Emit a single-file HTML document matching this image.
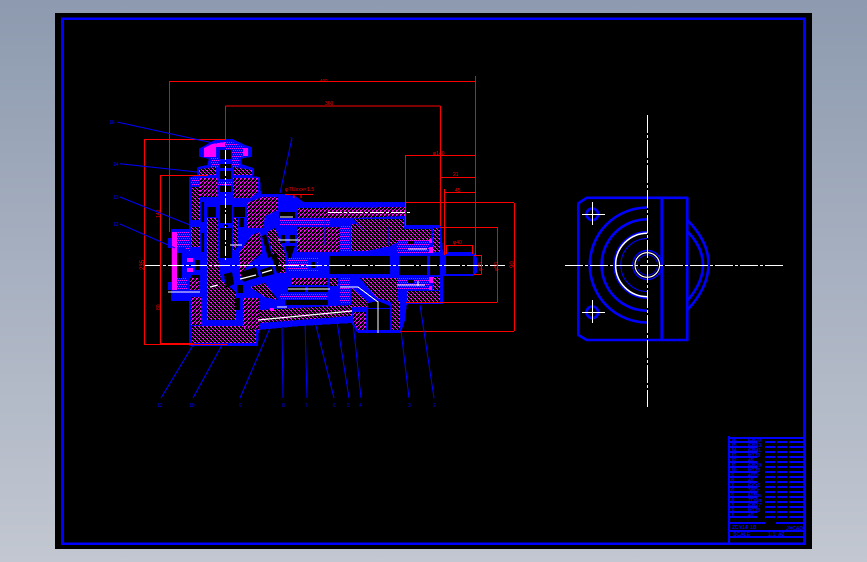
<!DOCTYPE html>
<html><head><meta charset="utf-8"><title>CAD drawing</title>
<style>
html,body{margin:0;padding:0;width:867px;height:562px;overflow:hidden;background:linear-gradient(180deg,#8d9aaf 0%,#a8b1c1 50%,#c2c7d1 100%)}
#f{position:absolute;left:55px;top:13px;width:757px;height:536px;background:#000}
svg{position:absolute;left:0;top:0}
text{font-family:"Liberation Sans",sans-serif}
</style></head><body>
<div id="f"></div>
<svg width="867" height="562" viewBox="0 0 867 562" shape-rendering="crispEdges" fill="none">
<defs>
<pattern id="h" width="4" height="4" patternUnits="userSpaceOnUse">
<rect width="4" height="4" fill="#000"/>
<g fill="#f0f"><rect x="3" y="0" width="1" height="1"/><rect x="2" y="1" width="1" height="1"/><rect x="0" y="2" width="2" height="1"/><rect x="0" y="3" width="1" height="1"/></g>
</pattern>
<pattern id="g" width="4" height="4" patternUnits="userSpaceOnUse">
<rect width="4" height="4" fill="#000"/>
<g fill="#f0f"><rect x="0" y="0" width="1" height="1"/><rect x="1" y="1" width="1" height="1"/><rect x="2" y="2" width="2" height="1"/><rect x="3" y="3" width="1" height="1"/></g>
</pattern>
<pattern id="d" width="4" height="4" patternUnits="userSpaceOnUse">
<rect width="4" height="4" fill="#00f"/>
<g fill="#f0f"><rect x="0" y="0" width="1" height="1"/><rect x="2" y="0" width="1" height="1"/><rect x="1" y="2" width="1" height="1"/><rect x="3" y="2" width="1" height="1"/></g>
<g fill="#000"><rect x="1" y="1" width="1" height="1"/><rect x="3" y="3" width="1" height="1"/></g>
</pattern>
</defs>

<!-- frame -->
<rect x="62.5" y="18.7" width="742" height="525" stroke="#00f" stroke-width="2.6"/>

<!-- silhouette -->
<path fill="#00f" stroke="#00f" stroke-width="2" stroke-linejoin="round" d="M190 345V178L198 176V168L208 166L210 158L205 157L200 156V149L206 146L217 140H232L245 146L251 148V156L244 157L240 158L241 165L253 169V174L250 177L259 178L260 195H283L295 197L303 203H405V226H440L442 253H473L476 258V272L473 275H442V303H406L404 320L400 332H358L352 322L300 325L258 329L257 345Z"/>
<path fill="#00f" stroke="#00f" stroke-width="2" d="M172 230H190V300H172Z"/>
<rect x="168" y="238" width="5" height="10" fill="#00f"/><rect x="168" y="282" width="5" height="8" fill="#00f"/>

<!-- knob -->
<path fill="url(#d)" d="M225 142H232L244 147L242 158H232V150H225Z"/>
<path fill="#f0f" d="M204 148L212 144L225 142V147H216V157H204Z"/>
<rect x="243" y="148" width="5" height="8" fill="#f0f"/>
<rect x="211" y="158" width="8" height="9" fill="url(#d)"/>
<rect x="232" y="158" width="7" height="9" fill="url(#d)"/>
<path fill="url(#g)" d="M199 169L216 167V175H199ZM234 167L252 170V175H234Z"/>
<rect x="220" y="150" width="11" height="9" fill="#000"/>
<rect x="220" y="164" width="11" height="4" fill="#000"/>
<rect x="220" y="171" width="11" height="8" fill="#000"/>
<rect x="220" y="186" width="11" height="6" fill="#000"/>
<rect x="218" y="181" width="14" height="4" fill="url(#d)"/>

<!-- upper valve body -->
<path fill="url(#h)" d="M200 178H217V197H200ZM233 178H258V192L250 198H233Z"/>
<rect x="191" y="178" width="8" height="8" fill="url(#d)"/>
<path fill="url(#g)" d="M192 187H200V220H192ZM191 227H200V247H191Z"/>
<path fill="url(#h)" d="M191 297H201V325H191Z"/>
<path fill="url(#g)" d="M192 326H256V343H192Z"/>
<rect x="201" y="202" width="3" height="20" fill="#000"/>
<rect x="201" y="233" width="3" height="19" fill="#000"/>
<rect x="207" y="207" width="9" height="10" fill="#000"/>
<rect x="233" y="207" width="12" height="10" fill="#000"/>
<rect x="220" y="205" width="12" height="18" fill="#000"/>
<rect x="220" y="228" width="12" height="30" fill="#000"/>
<rect x="224" y="225" width="4" height="2" fill="#000"/>
<path fill="url(#g)" d="M207 218H218V258L207 277Z"/>
<path fill="url(#g)" d="M207 258H218L221 280L236 292V320H207Z"/>
<path fill="url(#g)" d="M233 218H238V246L233 252Z"/>
<rect x="239" y="218" width="5" height="9" fill="#000"/>
<path fill="url(#h)" d="M247 203L262 197H278V210L265 216L263 228H247Z"/>
<path fill="url(#h)" d="M243 298H259V330L243 328Z"/>
<rect x="235" y="298" width="5" height="12" fill="#000"/>

<!-- flange -->
<path fill="url(#d)" d="M177 232H190V252L184 247H177Z"/>
<rect x="172" y="232" width="5" height="58" fill="#f0f"/>
<rect x="177" y="253" width="5" height="25" fill="#000"/>
<path fill="url(#d)" d="M177 278H187V290H177Z"/>
<rect x="187" y="258" width="6" height="4" fill="#f0f"/>
<rect x="187" y="268" width="6" height="4" fill="#f0f"/>
<rect x="195" y="260" width="5" height="10" fill="#000"/>
<rect x="191" y="275" width="9" height="6" fill="#000"/>
<path fill="url(#h)" d="M190 278H199V290H190Z"/>

<!-- swash -->
<path fill="url(#h)" d="M239 253L252 235L260 232L262 253L248 265L240 277Z"/>
<path fill="url(#g)" d="M267 232L275 228L285 253V273H278L275 263Z"/>
<path fill="#000" d="M262 236L266 234L272 256L268 258Z"/>
<path fill="#000" d="M271 255L276 253L282 271L277 273Z"/>
<path fill="#000" d="M240 272L256 267L259 277L243 282Z"/>
<path fill="#000" d="M260 270L272 266L274 274L262 277Z"/>
<path fill="#000" d="M224 274L232 272L234 284L226 288Z"/>
<path fill="url(#g)" d="M250 287L265 283L278 300L265 297Z"/>
<rect x="237" y="285" width="6" height="8" fill="#000"/>

<!-- top barrel -->
<path fill="url(#h)" d="M298 208L405 207V216L355 218H297Z"/>
<rect x="280" y="220" width="50" height="6" fill="url(#d)"/>
<rect x="279" y="212" width="16" height="6" fill="#000"/>
<path fill="url(#h)" d="M297 227H339V252H297Z"/>
<rect x="340" y="225" width="10" height="26" fill="url(#d)"/>
<path fill="url(#g)" d="M351 224H357L380 244L385 247L367 251H351Z"/>
<path fill="url(#g)" d="M353 219H404V229H431V243H396L388 247H381Z"/>
<path fill="url(#g)" d="M433 228H440V252H433Z"/>
<rect x="281" y="235" width="4" height="8" fill="#000"/>
<rect x="290" y="235" width="5" height="8" fill="#000"/>
<path fill="#000" d="M285 246H295L291 258H288Z"/>
<rect x="288" y="258" width="30" height="14" fill="url(#d)"/>
<rect x="308" y="260" width="9" height="10" fill="#00f"/><rect x="311" y="262" width="4" height="6" fill="#000"/>

<!-- shaft -->
<rect x="329" y="256" width="61" height="18" fill="#000"/>
<rect x="399" y="256" width="28" height="19" fill="#000"/>
<rect x="430" y="256" width="10" height="19" fill="#000"/>
<rect x="446" y="256" width="27" height="18" fill="#000"/>
<rect x="397" y="240" width="32" height="13" fill="url(#d)"/>
<rect x="397" y="277" width="32" height="13" fill="url(#d)"/>
<rect x="408" y="241" width="6" height="3" fill="#000"/>
<rect x="408" y="280" width="6" height="3" fill="#000"/>
<rect x="429" y="247" width="4" height="6" fill="#f0f"/>
<rect x="429" y="277" width="4" height="6" fill="#f0f"/>
<rect x="429" y="239" width="3" height="4" fill="#f0f"/>
<rect x="429" y="286" width="3" height="4" fill="#f0f"/>
<rect x="433" y="277" width="7" height="13" fill="url(#g)"/>

<!-- pistons lower -->
<path fill="url(#h)" d="M292 278H327V285H292Z"/>
<rect x="288" y="287" width="17" height="5" fill="#000"/>
<rect x="308" y="287" width="20" height="5" fill="#000"/>
<rect x="280" y="293" width="47" height="6" fill="url(#d)"/>
<rect x="285" y="300" width="43" height="5" fill="#000"/>
<rect x="330" y="278" width="8" height="8" fill="url(#g)"/>
<rect x="340" y="278" width="10" height="25" fill="url(#d)"/>
<path fill="url(#g)" d="M260 310L352 305V316L260 323Z"/>
<rect x="270" y="308" width="4" height="3" fill="#f0f"/>
<path fill="url(#g)" d="M352 288L367 301V307H352Z"/>
<path fill="url(#h)" d="M353 312H366V330H358L353 322Z"/>
<path fill="url(#g)" d="M360 278H397V302H391L377 298Z"/>
<path fill="#000" d="M368 303L378 301L390 306V330H368Z"/>
<rect x="368" y="308" width="22" height="1" fill="#00f"/>
<path fill="url(#g)" d="M392 301H400V330H392Z"/>
<rect x="407" y="291" width="33" height="11" fill="url(#g)"/>

<!-- hairlines -->
<path d="M325 245V220M388 245V227" stroke="#00f" stroke-width="1"/>

<!-- white center lines -->
<g stroke="#fff" stroke-width="1">
<path stroke-dasharray="16 2 3 2" d="M145 265.500H505"/>
<path stroke-dasharray="10 2 2 2" d="M225.500 150V262"/>
<path stroke-dasharray="14 2 3 2" d="M328 212.500H410"/>
<path d="M280 217H293M278 240H300M230 245H242M168 292H200M277 307H287M288 289H330M340 287H358L378 302V333"/>
<path d="M397 285H425M418 281V286M408 249H427"/>
</g>
<path stroke="#fff" stroke-width="1.200" shape-rendering="auto" d="M210 287L218 285M240 279L256 275M262 273L272 270M258 320L352 311"/>

<!-- red dimensions -->
<g stroke="#f00" stroke-width="1">
<path d="M170 81.500H475M169.500 81V232M225.500 106H440.500M225.500 106V140M440.500 106V226M475.500 76V255M405.500 155.500H475M405.500 155V226M440 177.500H475M444.500 189V255M444 192.500H475M405 202.500H514M514.500 203V331M400 331.500H514M440 227.500H497M497.500 227V302M406 302.500H497M446.500 245.500H472.500M446.500 245V254M472.500 245V254M474 255.500H481.500M481.500 255V274M474 274.500H481.500M144.500 139.500V344M144 139.500H225M144 344.500H227M160.500 175.500V344M160 175.500H208M285 194.500H313M294 194V198M301 194V198"/>
</g>
<rect x="160" y="343" width="33" height="2" fill="#f00"/>
<g fill="#f00" font-size="5">
<text x="320" y="82" font-size="4.500">400</text>
<text x="325" y="105">360</text>
<text x="433" y="155">φ140</text>
<text x="453" y="176">21</text>
<text x="455" y="192">45</text>
<text x="453" y="244">φ40</text>
<text x="285" y="191" font-size="5.400">φTUxxx×1.5</text>
<text transform="translate(160 218) rotate(-90)">140</text>
<text transform="translate(144 270) rotate(-90)" font-size="6">235</text>
<text transform="translate(160 310) rotate(-90)">80</text>
<text transform="translate(482 271) rotate(-90)">φ25</text>
<text transform="translate(498 271) rotate(-90)">φ50</text>
<text transform="translate(514 268) rotate(-90)" font-size="6">90</text>
</g>

<!-- leaders -->
<g stroke="#00f" stroke-width="1" shape-rendering="auto">
<path d="M117 122L213 143M120 163.700L197 172M120 197L190 225M120 224L175 248M280 193L292 138M161 398L193 345M193 398L222 345M240 398L270 328M283 398L282 328M307 398L305 320M334 398L315 322M349 398L337 322M361 398L353 322M409 398L400 322M434 398L420 305"/>
</g>
<g fill="#00f" font-size="5">
<text x="109" y="124">16</text><text x="113" y="166">14</text><text x="113" y="199">13</text><text x="113" y="226">12</text><text x="290" y="141">1</text>
<text x="157" y="407">12</text><text x="189" y="407">10</text><text x="239" y="407">9</text><text x="282" y="407">8</text><text x="305" y="407">7</text><text x="333" y="407">6</text><text x="347" y="407">5</text><text x="359" y="407">4</text><text x="408" y="407">3</text><text x="433" y="407">2</text>
</g>

<!-- right view -->
<g shape-rendering="auto">
<g stroke="#00f" stroke-width="2.600" stroke-linejoin="round">
<path d="M578.300 203.300L586.700 197.800H687.300V340H586.700L578.300 335Z"/>
<path d="M661.700 197V340"/>
<path d="M647.300 207.500A57.500 57.500 0 0 0 647.300 322.500"/>
<path d="M647.300 219.300A45.700 45.700 0 0 0 647.300 310.700"/>
<path d="M687.300 220Q709 242 708.500 265T687.300 310"/>
<path d="M688 232Q703 248 703 265T688 300"/>
<circle cx="592.300" cy="214.300" r="5.800"/>
<circle cx="592.300" cy="312.300" r="5.800"/>
</g>
<path d="M647.300 232.500A32.500 32.500 0 0 0 647.300 297.500" stroke="#00f" stroke-width="3"/>
<path d="M647.300 233.300A31.700 31.700 0 0 0 647.300 296.700" stroke="#fff" stroke-width="1.500"/>
<path d="M647.300 238.500A26.500 26.500 0 0 0 647.300 291.500" stroke="#00f" stroke-width="1"/>
<circle cx="647.300" cy="265" r="14.500" stroke="#00f" stroke-width="1.400"/>
<circle cx="647.300" cy="265" r="12.300" stroke="#fff" stroke-width="1.100"/>
<circle cx="647.300" cy="265" r="10.200" stroke="#00f" stroke-width=".8"/>
</g>
<g stroke="#fff" stroke-width="1">
<path stroke-dasharray="18 2 3 2" d="M647.500 115V407"/>
<path stroke-dasharray="18 2 3 2" d="M565 265.500H784"/>
<path d="M582 214.500H605M592.500 202V225M582 312.500H605M592.500 300V323"/>
</g>

<!-- title block -->
<g fill="#00f">
<rect x="728" y="436" width="2" height="108"/><rect x="728" y="437" width="76" height="2"/>
</g>
<g stroke="#00f" stroke-width="2">
<path stroke-dasharray="28 8 10 2 10 2 14 2" d="M729 442H804M729 447H804M729 452H804M729 457H804M729 462H804M729 467H804M729 472H804M729 477H804M729 482H804M729 487H804M729 492H804M729 497H804M729 502H804M729 507H804M729 512H804M729 517H804"/>
<path d="M729 523H765M776 523H804M729 531H804M729 537H804"/>
</g>
<g fill="#00f" font-size="5" font-weight="bold">
<text x="731" y="442">16</text><text x="748" y="442">GB70</text>
<text x="731" y="447">15</text><text x="748" y="447">GB93</text>
<text x="731" y="452">14</text><text x="748" y="452">GB41</text>
<text x="731" y="457">13</text><text x="748" y="457">HT20</text>
<text x="731" y="462">12</text><text x="748" y="462">45</text>
<text x="731" y="467">11</text><text x="748" y="467">GB29</text>
<text x="731" y="472">10</text><text x="748" y="472">HT20</text>
<text x="731" y="477">9</text><text x="748" y="477">40Cr</text>
<text x="731" y="482">8</text><text x="748" y="482">45</text>
<text x="731" y="487">7</text><text x="748" y="487">GCr1</text>
<text x="731" y="492">6</text><text x="748" y="492">38Cr</text>
<text x="731" y="497">5</text><text x="748" y="497">65Mn</text>
<text x="731" y="502">4</text><text x="748" y="502">ZQSn</text>
<text x="731" y="507">3</text><text x="748" y="507">GB27</text>
<text x="731" y="512">2</text><text x="748" y="512">HT20</text>
<text x="731" y="517">1</text><text x="748" y="517">45</text>
<text x="732" y="529">ZCY14</text><text x="750" y="529">1B</text>
<text x="733" y="536">SCALE</text><text x="768" y="536">1:1</text><text x="778" y="536">A2</text><text x="786" y="530">JXCAD</text>
</g>
</svg>
</body></html>
